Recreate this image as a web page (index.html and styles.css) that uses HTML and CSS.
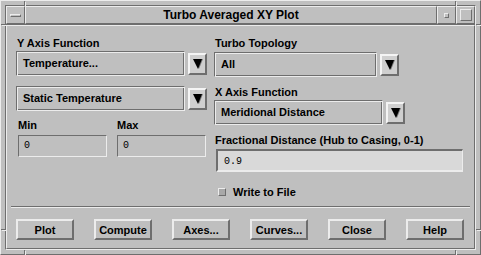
FILE: index.html
```html
<!DOCTYPE html>
<html lang="en">

<head>
    <meta charset="UTF-8">
    <title>Turbo Averaged XY Plot</title>
    <link rel="stylesheet" href="styles.css">
</head>

<body>
<div class="window">
    <!-- resize handle marks of the window frame -->
    <span class="tick v top-l"></span>
    <span class="tick v top-r"></span>
    <span class="tick v bot-l"></span>
    <span class="tick v bot-r"></span>
    <span class="tick h left-t"></span>
    <span class="tick h left-b"></span>
    <span class="tick h right-t"></span>
    <span class="tick h right-b"></span>

    <div class="frame">
        <div class="titlebar">
            <div class="tb-btn menu"><span class="menu-bar"></span></div>
            <div class="title">Turbo Averaged XY Plot</div>
            <div class="tb-btn"><span class="min-dot"></span></div>
            <div class="tb-btn"><span class="max-box"></span></div>
        </div>

        <div class="dialog">
            <div class="panel">
                <div class="col left">
                    <div class="label">Y Axis Function</div>
                    <div class="option first">
                        <div class="option-box w169">Temperature...</div>
                        <div class="arrow-btn"><span class="tri"></span></div>
                    </div>
                    <div class="option second">
                        <div class="option-box w169">Static Temperature</div>
                        <div class="arrow-btn"><span class="tri"></span></div>
                    </div>
                    <div class="minmax">
                        <div class="label">Min</div>
                        <div class="label">Max</div>
                        <div class="field">0</div>
                        <div class="field">0</div>
                    </div>
                </div>

                <div class="col right">
                    <div class="label">Turbo Topology</div>
                    <div class="option first-r">
                        <div class="option-box w163">All</div>
                        <div class="arrow-btn"><span class="tri"></span></div>
                    </div>
                    <div class="label gap-label">X Axis Function</div>
                    <div class="option near">
                        <div class="option-box w169">Meridional Distance</div>
                        <div class="arrow-btn"><span class="tri"></span></div>
                    </div>
                    <div class="label gap-label">Fractional Distance (Hub to Casing, 0-1)</div>
                    <div class="field wide">0.9</div>
                    <div class="check-row">
                        <span class="check"></span>
                        <span class="check-text">Write to File</span>
                    </div>
                </div>
            </div>

            <div class="sep"></div>
            <div class="actions">
                <div class="button">Plot</div>
                <div class="button">Compute</div>
                <div class="button">Axes...</div>
                <div class="button">Curves...</div>
                <div class="button">Close</div>
                <div class="button">Help</div>
            </div>
        </div>
    </div>
</div>
</body>
</html>
```

FILE: styles.css
```css
* {
    margin: 0;
    padding: 0;
    box-sizing: border-box;
}

body {
    background-color: #bfbfbf;
    font-family: "Liberation Sans", Arial, sans-serif;
    font-weight: bold;
    font-size: 11px;
    color: #000000;
}

.window {
    position: relative;
    width: 481px;
    height: 255px;
    padding: 4px;
    border: 1px solid;
    border-color: #ececec #6e6e6e #6e6e6e #ececec;
    background-color: #bfbfbf;
}

.tick {
    position: absolute;
    background-color: #6e6e6e;
    box-shadow: 1px 1px 0 #ececec;
}

.tick.v {
    width: 1px;
    height: 4px;
}

.tick.h {
    width: 4px;
    height: 1px;
}

.top-l { left: 23px; top: 0; }
.top-r { left: 454px; top: 0; }
.bot-l { left: 23px; bottom: 0; }
.bot-r { left: 454px; bottom: 0; }
.left-t { left: 0; top: 23px; }
.left-b { left: 0; top: 228px; }
.right-t { right: 0; top: 23px; }
.right-b { right: 0; top: 228px; }

.frame {
    height: 245px;
    display: flex;
    flex-direction: column;
    border: 1px solid;
    border-color: #6e6e6e #ececec #ececec #6e6e6e;
}

.titlebar {
    display: flex;
    height: 19px;
    border-bottom: 1px solid #6e6e6e;
}

.tb-btn {
    width: 19px;
    display: flex;
    align-items: center;
    justify-content: center;
    border: 1px solid;
    border-color: #ececec #6e6e6e #6e6e6e #ececec;
}

.title {
    flex: 1;
    display: flex;
    align-items: center;
    justify-content: center;
    font-size: 12px;
    border: 1px solid;
    border-color: #ececec #6e6e6e #6e6e6e #ececec;
}

.menu-bar {
    width: 11px;
    height: 3px;
    border: 1px solid;
    border-color: #ececec #6e6e6e #6e6e6e #ececec;
}

.min-dot {
    width: 5px;
    height: 5px;
    border: 1px solid;
    border-color: #ececec #6e6e6e #6e6e6e #ececec;
}

.max-box {
    width: 12px;
    height: 12px;
    border: 1px solid;
    border-color: #ececec #6e6e6e #6e6e6e #ececec;
}

.dialog {
    flex: 1;
    display: flex;
    flex-direction: column;
    border: 1px solid;
    border-color: #ececec #6e6e6e #6e6e6e #ececec;
}

.panel {
    display: flex;
    gap: 7px;
    padding: 11px 0 0 9px;
}

.col {
    display: flex;
    flex-direction: column;
}

.left {
    width: 191px;
}

.right {
    width: 249px;
}

.label {
    height: 13px;
    line-height: 13px;
    padding-left: 1px;
    white-space: nowrap;
}

.option {
    display: flex;
    align-items: center;
}

.first {
    margin-top: 1px;
}

.second {
    margin-top: 10px;
}

.first-r {
    margin-top: 2px;
}

.near {
    margin-top: 1px;
}

.gap-label {
    margin-top: 9px;
}

.option-box {
    height: 25px;
    line-height: 23px;
    padding-left: 6px;
    border: 1px solid;
    border-color: #6e6e6e #ececec #ececec #6e6e6e;
    box-shadow: inset 1px 1px 0 #ececec, inset -1px -1px 0 #6e6e6e;
}

.w169 {
    width: 169px;
}

.w163 {
    width: 163px;
}

.arrow-btn {
    width: 19px;
    height: 22px;
    margin-left: 3px;
    display: flex;
    align-items: center;
    justify-content: center;
    background-color: #cfcfcf;
    border: 2px solid;
    border-color: #f4f4f4 #6e6e6e #6e6e6e #f4f4f4;
}

.tri {
    width: 0;
    height: 0;
    margin-top: 1px;
    border-left: 5px solid transparent;
    border-right: 4px solid transparent;
    border-top: 10px solid #000000;
    filter: drop-shadow(1px 0 0 #7a7a7a);
}

.minmax {
    display: grid;
    grid-template-columns: 90px 90px;
    column-gap: 9px;
    margin: 8px 0 0 1px;
}

.minmax .field {
    margin-top: 3px;
    margin-left: 1px;
}

.field {
    height: 22px;
    line-height: 20px;
    padding-left: 5px;
    font-family: "Liberation Mono", monospace;
    font-weight: normal;
    font-size: 10px;
    border: 1px solid;
    border-color: #6e6e6e #ececec #ececec #6e6e6e;
}

.wide {
    width: 247px;
    height: 23px;
    line-height: 21px;
    margin: 2px 0 0 2px;
    padding-left: 6px;
    background-color: #d9d9d9;
    border-width: 2px 1px 2px 2px;
}

.check-row {
    display: flex;
    align-items: center;
    margin: 13px 0 0 4px;
    height: 13px;
}

.check {
    width: 8px;
    height: 8px;
    background-color: #a8a8a8;
    border: 1px solid;
    border-color: #ececec #6e6e6e #6e6e6e #ececec;
}

.check-text {
    margin-left: 7px;
}

.sep {
    margin: auto 4px 0 4px;
    height: 2px;
    border-top: 1px solid #6e6e6e;
    border-bottom: 1px solid #ececec;
}

.actions {
    display: flex;
    gap: 20px;
    padding: 11px 0 8px 9px;
}

.button {
    width: 58px;
    height: 21px;
    display: flex;
    align-items: center;
    justify-content: center;
    border: 2px solid;
    border-color: #ececec #6e6e6e #6e6e6e #ececec;
}
```
